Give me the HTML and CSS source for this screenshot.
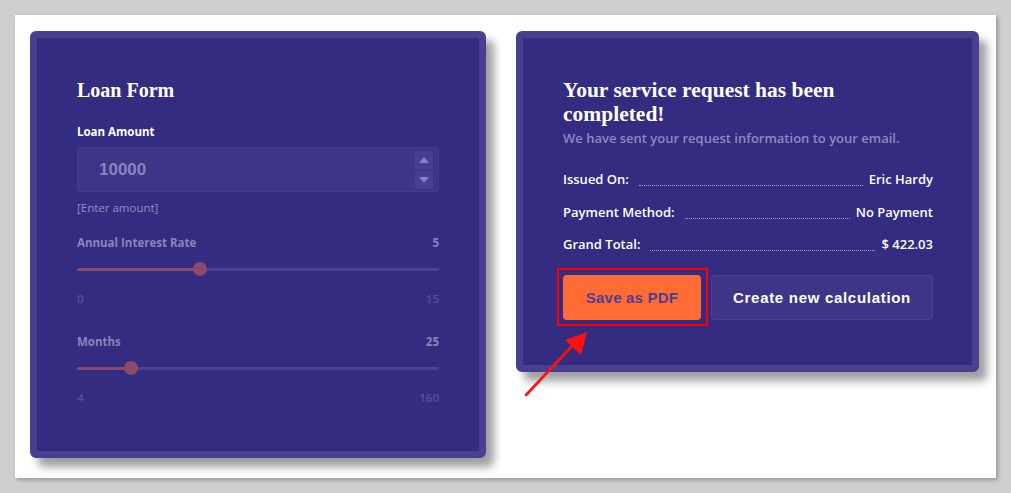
FILE: index.html
```html
<!DOCTYPE html>
<html lang="en">
<head>
<meta charset="utf-8">
<title>Loan Form</title>
<link rel="stylesheet" href="styles.css">
</head>
<body>
<div class="sheet">
  <section class="card card-form">
    <h2 class="title">Loan Form</h2>
    <div class="label">Loan Amount</div>
    <div class="input">
      <span class="input-value">10000</span>
      <div class="spin">
        <span class="spin-btn"><span class="tri up"></span></span>
        <span class="spin-btn"><span class="tri down"></span></span>
      </div>
    </div>
    <div class="hint">[Enter amount]</div>

    <div class="range-group first">
      <div class="range-head"><span>Annual Interest Rate</span><span>5</span></div>
      <div class="track"><div class="fill" style="width:34%"><span class="thumb"></span></div></div>
      <div class="range-ends"><span>0</span><span>15</span></div>
    </div>

    <div class="range-group">
      <div class="range-head"><span>Months</span><span>25</span></div>
      <div class="track"><div class="fill" style="width:15%"><span class="thumb"></span></div></div>
      <div class="range-ends"><span>4</span><span>160</span></div>
    </div>
  </section>

  <section class="card card-done">
    <h2 class="title title-done">Your service request has been completed!</h2>
    <p class="subtitle">We have sent your request information to your email.</p>
    <div class="rows">
      <div class="row"><span class="key">Issued On:</span><span class="dots"></span><span class="val">Eric Hardy</span></div>
      <div class="row"><span class="key">Payment Method:</span><span class="dots"></span><span class="val">No Payment</span></div>
      <div class="row"><span class="key">Grand Total:</span><span class="dots"></span><span class="val">$ 422.03</span></div>
    </div>
    <div class="actions">
      <button class="btn btn-pdf">Save as PDF</button>
      <button class="btn btn-new">Create new calculation</button>
    </div>
  </section>

  <svg class="arrow" width="80" height="80" viewBox="0 0 80 80" aria-hidden="true">
    <path d="M4 67 L52 16" stroke="#ff1010" stroke-width="2.6" stroke-linecap="round" fill="none"/>
    <path d="M65 4 L43 12 L59 27 Z" fill="#ff1010"/>
  </svg>
</div>
</body>
</html>
```

FILE: styles.css
```css
* { box-sizing: border-box; }

html, body {
  margin: 0;
  padding: 0;
}

body {
  background: #cfcfcf;
  width: 1011px;
  height: 493px;
  overflow: hidden;
  font-family: "Open Sans", "Noto Sans", sans-serif;
}

.sheet {
  position: relative;
  margin: 15px 0 0 15px;
  width: 981px;
  height: 463px;
  background: #ffffff;
  box-shadow: 2px 2px 4px rgba(0, 0, 0, 0.28);
  display: flex;
  align-items: flex-start;
  gap: 30px;
  padding: 16px 17px 0 15px;
}

.card {
  background: #332c80;
  border: 7px solid #483f8f;
  border-radius: 6px;
  box-shadow: 8px 9px 8px rgba(0, 0, 0, 0.38);
  color: #ffffff;
}

.card-form {
  width: 456px;
  padding: 40px 40px 45px 40px;
}

.card-done {
  width: 463px;
  padding: 40px 39px 45px 40px;
}

.title {
  margin: 0;
  font-family: "Liberation Serif", "Times New Roman", serif;
  font-weight: bold;
  font-size: 20px;
  line-height: 24px;
  color: #ffffff;
}

.title-done {
  font-size: 21.5px;
}

.label {
  margin-top: 22px;
  font-size: 11.5px;
  line-height: 16px;
  font-weight: 700;
  color: #ffffff;
}

.input {
  margin-top: 7px;
  height: 45px;
  background: #3d3588;
  border: 1px solid #443c8f;
  border-radius: 4px;
  display: flex;
  align-items: center;
  justify-content: space-between;
  padding: 0 5px 0 21px;
}

.input-value {
  font-family: "Liberation Sans", Arial, sans-serif;
  font-weight: bold;
  font-size: 17px;
  color: #8a83c0;
}

.spin {
  display: flex;
  flex-direction: column;
  gap: 2px;
}

.spin-btn {
  width: 18px;
  height: 18px;
  border-radius: 3px;
  background: #473f93;
  display: flex;
  align-items: center;
  justify-content: center;
}

.tri {
  width: 0;
  height: 0;
  border-left: 5px solid transparent;
  border-right: 5px solid transparent;
}

.tri.up { border-bottom: 6px solid #8a83c0; }
.tri.down { border-top: 6px solid #8a83c0; }

.hint {
  margin-top: 8px;
  font-size: 11.5px;
  line-height: 16px;
  font-weight: 500;
  color: #948dc8;
}

.range-group { margin-top: 27px; }
.range-group.first { margin-top: 19px; }

.range-head,
.range-ends {
  display: flex;
  justify-content: space-between;
  font-size: 11.5px;
  line-height: 16px;
  font-weight: 700;
}

.range-head { color: #8a83be; }
.range-ends { color: #574f9e; font-weight: 600; margin-top: 15px; }

.track {
  position: relative;
  margin-top: 11px;
  height: 14px;
  display: flex;
  align-items: center;
}

.track::before {
  content: "";
  position: absolute;
  left: 0;
  right: 0;
  top: 6px;
  height: 3px;
  background: #4a4294;
  border-radius: 2px;
}

.fill {
  position: relative;
  height: 3px;
  background: #8a4a6c;
  border-radius: 2px;
}

.thumb {
  position: absolute;
  right: -7px;
  top: -5.5px;
  width: 14px;
  height: 14px;
  border-radius: 50%;
  background: #8c4a6b;
}

.subtitle {
  margin: 3px 0 0;
  font-size: 13px;
  line-height: 18px;
  font-weight: 600;
  color: #8f88c4;
}

.rows {
  margin-top: 23px;
  display: flex;
  flex-direction: column;
  gap: 14.5px;
}

.row {
  display: flex;
  align-items: baseline;
  font-size: 13px;
  line-height: 18px;
  font-weight: 600;
  color: #ffffff;
}

.dots {
  flex: 1;
  margin: 0 6px 0 10px;
  border-bottom: 1px dotted #a59fd6;
  transform: translateY(2px);
}

.actions {
  margin-top: 22px;
  display: flex;
  gap: 10px;
}

.btn {
  height: 45px;
  border-radius: 4px;
  font-family: "Liberation Sans", Arial, sans-serif;
  font-weight: bold;
  font-size: 15px;
  cursor: pointer;
}

.btn-pdf {
  position: relative;
  width: 138px;
  background: #ff6b35;
  border: none;
  color: #4a3f92;
  letter-spacing: 0.2px;
}

.btn-pdf::after {
  content: "";
  position: absolute;
  left: -6px;
  right: -7px;
  top: -7px;
  bottom: -6px;
  border: 2px solid #ff0000;
}

.btn-new {
  width: 222px;
  background: #3d3588;
  border: 1px solid #4a4294;
  color: #ffffff;
  letter-spacing: 0.7px;
}

.arrow {
  position: absolute;
  left: 507px;
  top: 313px;
}
```
